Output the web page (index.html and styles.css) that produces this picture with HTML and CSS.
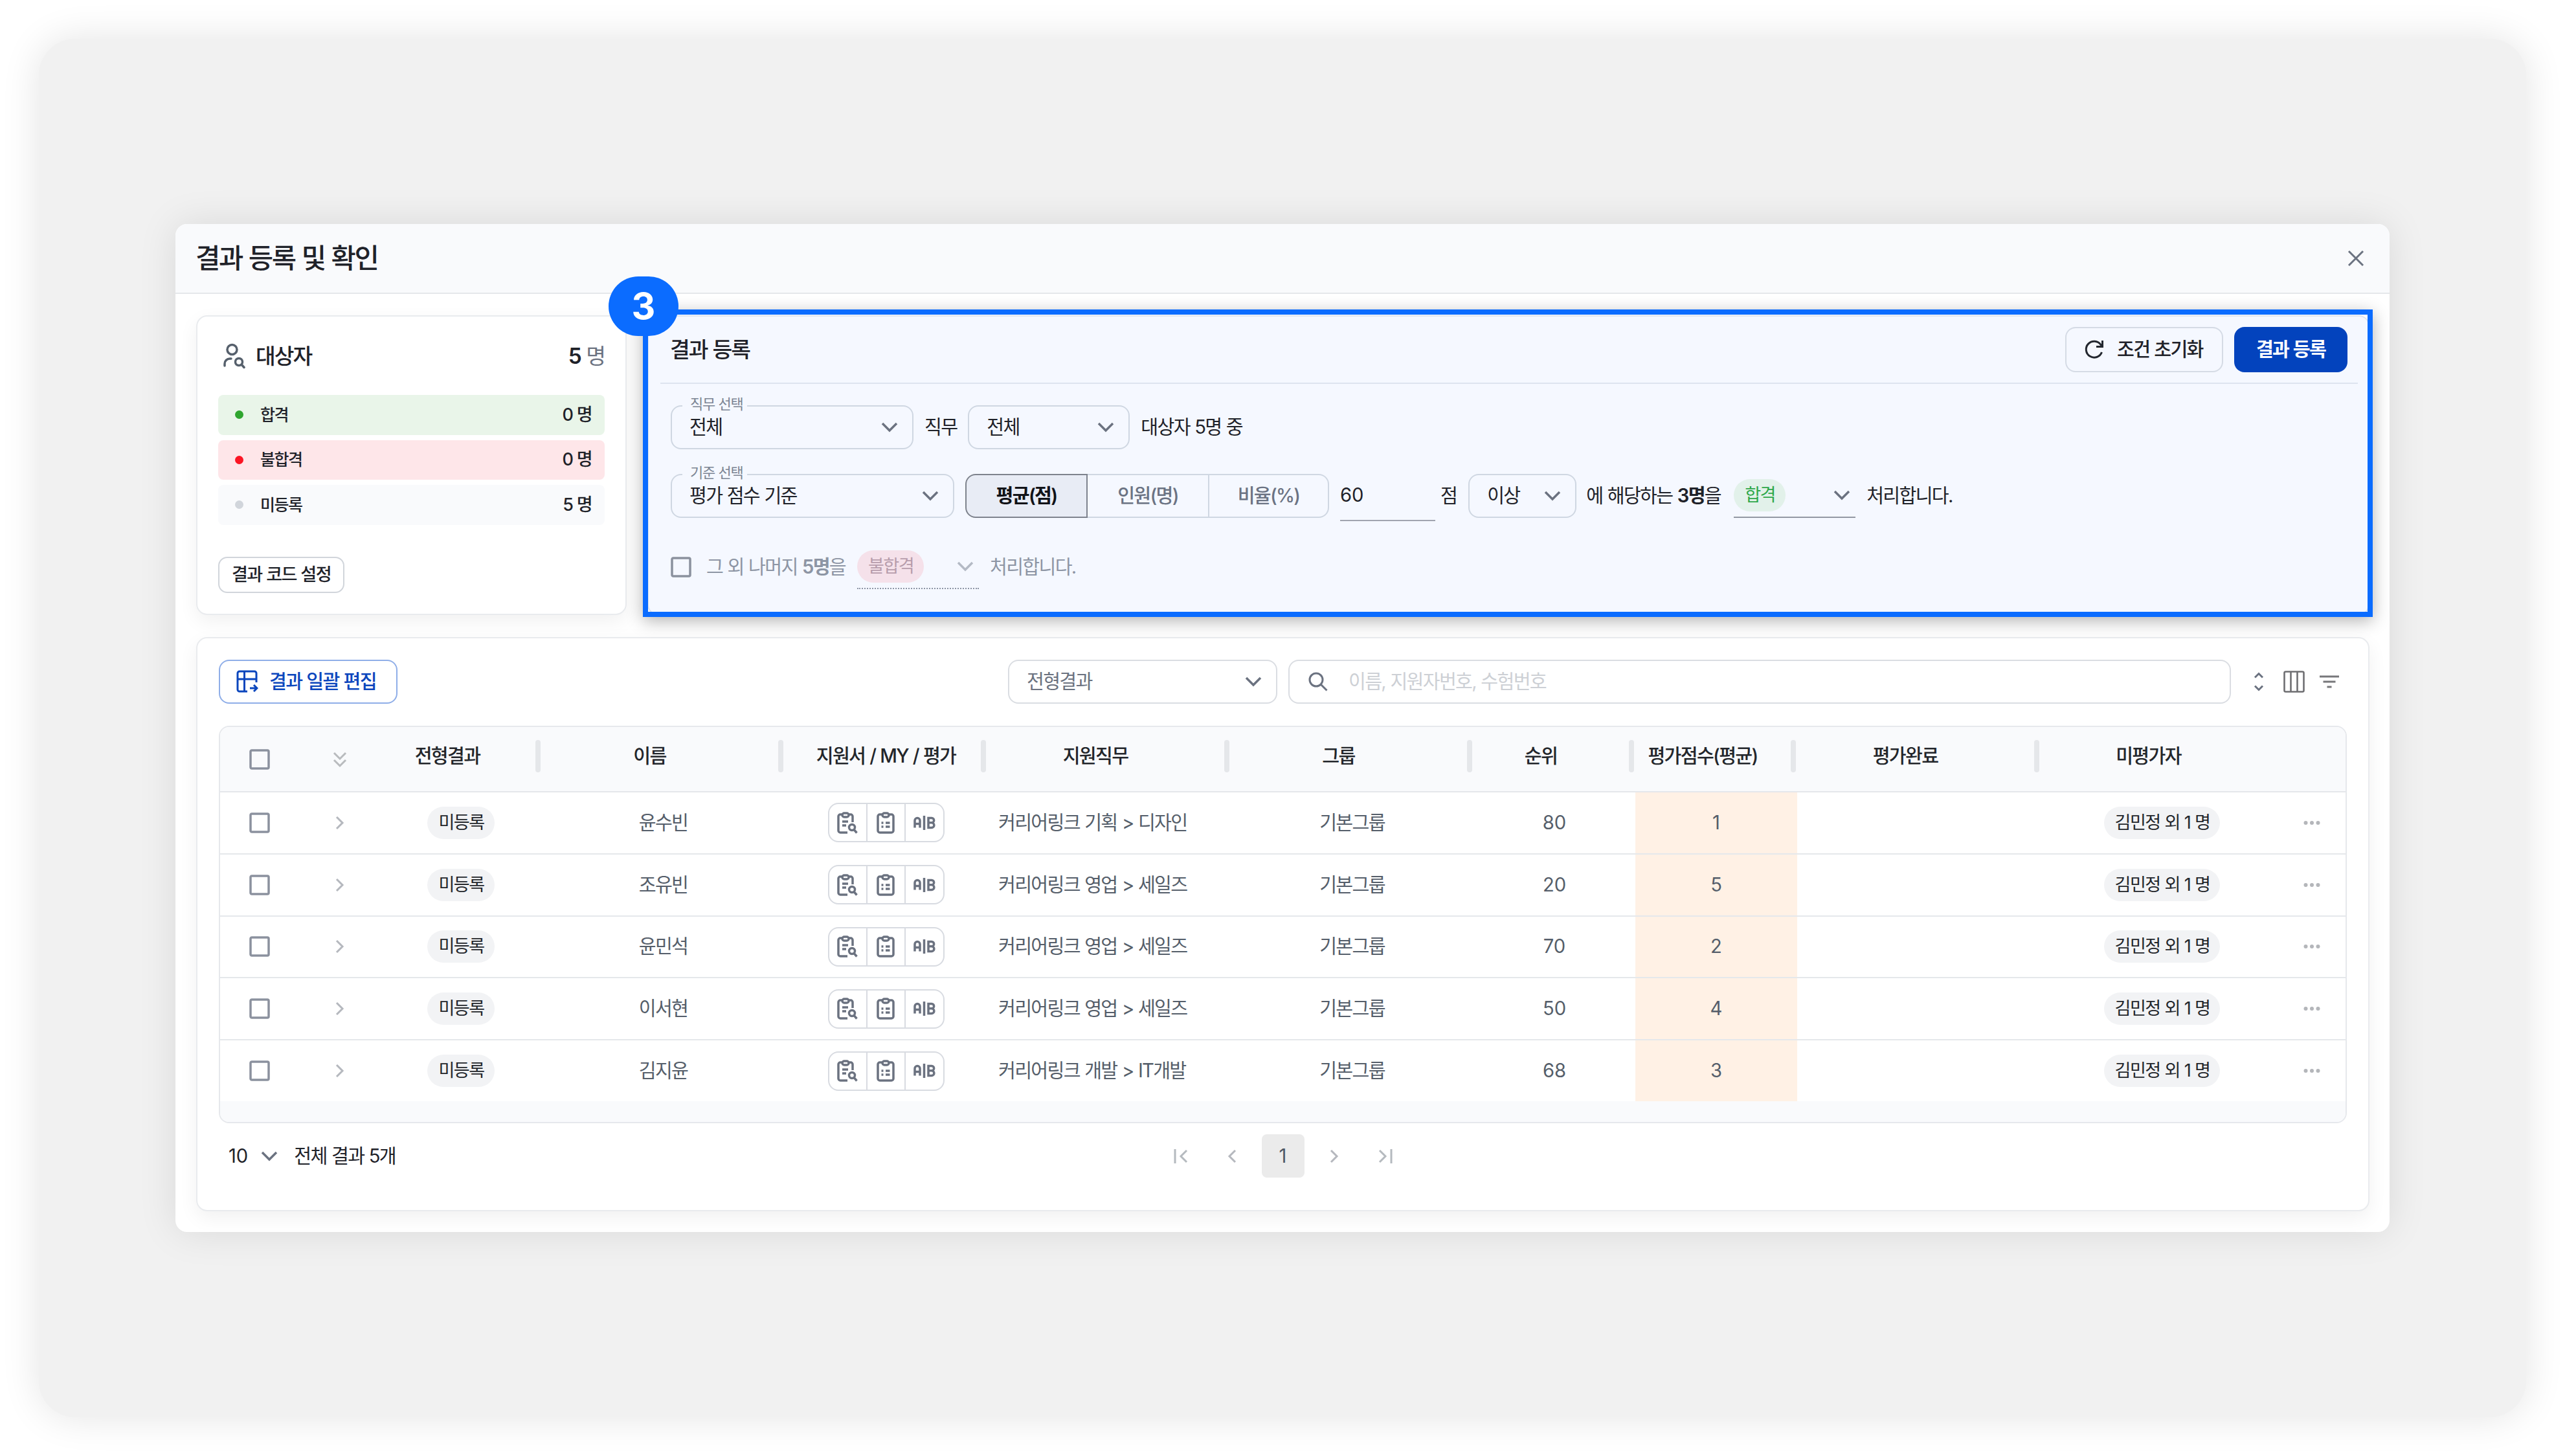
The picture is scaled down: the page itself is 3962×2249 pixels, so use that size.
FILE: index.html
```html
<!DOCTYPE html>
<html lang="ko">
<head>
  <meta charset="UTF-8" />
  <meta name="viewport" content="width=device-width, initial-scale=1.0"/>
  <title>결과 등록 및 확인</title>
  <link rel="stylesheet" href="styles.css">
</head>
<body>

  <!-- icons -->
  <svg class="sprite" aria-hidden="true">
    <symbol id="i-down" viewBox="0 0 26 16"><path d="M2 2l11 11L24 2"/></symbol>
    <symbol id="i-right" viewBox="0 0 14 22"><path d="M2 2l9 9-9 9"/></symbol>
    <symbol id="i-left" viewBox="0 0 14 22"><path d="M12 2l-9 9 9 9"/></symbol>
    <symbol id="i-first" viewBox="0 0 24 24"><path d="M3 1v22M21 3l-9 9 9 9"/></symbol>
    <symbol id="i-last" viewBox="0 0 24 24"><path d="M21 1v22M3 3l9 9-9 9"/></symbol>
    <symbol id="i-double" viewBox="0 0 22 26"><path d="M2 3l9 9 9-9M2 14l9 9 9-9"/></symbol>
    <symbol id="i-check" viewBox="0 0 32 32"><rect x="2" y="2" width="28" height="28" rx="2"/></symbol>
    <symbol id="i-close" viewBox="0 0 26 26"><path d="M2 2l22 22M24 2L2 24"/></symbol>
    <symbol id="i-person" viewBox="0 0 34 40">
      <circle cx="13.5" cy="10" r="7.5"/>
      <path d="M2 35v-3a8 8 0 0 1 8-8h2"/>
      <circle cx="24" cy="29" r="5.5"/><path d="M28 33l4 4.500"/>
    </symbol>
    <symbol id="i-refresh" viewBox="0 0 32 32">
      <path d="M27.500 20A12.500 12.500 0 1 1 26 8.500L28.500 11"/><path d="M28.500 2v9.500H19"/>
    </symbol>
    <symbol id="i-table" viewBox="0 0 34 36">
      <path d="M31 19V5a3 3 0 0 0-3-3H5a3 3 0 0 0-3 3v25a3 3 0 0 0 3 3h12M2 14h29M12.500 2v31"/>
      <path d="M21 28h10M27 23l5 5-5 5"/>
    </symbol>
    <symbol id="i-search" viewBox="0 0 30 30"><circle cx="12" cy="12" r="10"/><path d="M19.500 19.500l9 9"/></symbol>
    <symbol id="i-sort" viewBox="0 0 16 30"><path d="M2 8.500l6-6 6 6M2 21.500l6 6 6-6"/></symbol>
    <symbol id="i-columns" viewBox="0 0 33 34"><rect x="1.500" y="1.500" width="30" height="31" rx="2"/><path d="M11.500 2v30M21.500 2v30"/></symbol>
    <symbol id="i-filter" viewBox="0 0 30 20"><path d="M0 2h30M5.500 10h19M11.500 18h7"/></symbol>
    <symbol id="i-cliplook" viewBox="0 0 32 34">
      <path d="M8 4H5a3 3 0 0 0-3 3v22a3 3 0 0 0 3 3h11M18 4h3a3 3 0 0 1 3 3v9"/>
      <rect x="8" y="2" width="10" height="6" rx="3"/>
      <path d="M8 15h9M8 21h6"/><circle cx="23" cy="24" r="4.500"/><path d="M26.500 28l4 4.500"/>
    </symbol>
    <symbol id="i-cliplist" viewBox="0 0 28 34">
      <path d="M9 4H5a3 3 0 0 0-3 3v22a3 3 0 0 0 3 3h18a3 3 0 0 0 3-3V7a3 3 0 0 0-3-3h-4"/>
      <rect x="9" y="2" width="10" height="6" rx="3"/>
      <path d="M7.500 17h3M14 17h6.500M7.500 23h3M14 23h6.500"/>
    </symbol>
    <symbol id="i-ab" viewBox="0 0 34 24">
      <path d="M2 19.500V8.500a4 4 0 0 1 8 0v11M2 13.500h8M16.500 1v22M23 4.500h5a3.500 3.500 0 0 1 0 7.300a3.800 3.800 0 0 1 0 7.700h-5zM23 11.800h5"/>
    </symbol>
    <symbol id="i-more" viewBox="0 0 26 8"><circle cx="3.500" cy="4" r="3"/><circle cx="13" cy="4" r="3"/><circle cx="22.500" cy="4" r="3"/></symbol>
  </svg>

  <div class="stage">
    <div class="modal">
      <header class="modal-header">
        <h1>결과 등록 및 확인</h1>
        <svg class="icon close"><use href="#i-close"/></svg>
      </header>

      <div class="modal-body">
        <div class="top">
          <section class="card summary">
            <div class="summary-title">
              <svg class="icon person"><use href="#i-person"/></svg>
              <h2>대상자</h2>
              <p><b>5</b> 명</p>
            </div>
            <ul class="status-list">
              <li class="pass"><i></i><span>합격</span><em>0 명</em></li>
              <li class="fail"><i></i><span>불합격</span><em>0 명</em></li>
              <li class="none"><i></i><span>미등록</span><em>5 명</em></li>
            </ul>
            <button class="code-btn">결과 코드 설정</button>
          </section>

          <section class="panel">
            <div class="panel-header">
              <h2>결과 등록</h2>
              <button class="reset-btn"><svg class="icon refresh"><use href="#i-refresh"/></svg>조건 초기화</button>
              <button class="submit-btn">결과 등록</button>
            </div>

            <div class="line line-job">
              <div class="select w-job"><span class="legend">직무 선택</span>전체<svg class="icon down"><use href="#i-down"/></svg></div>
              <span>직무</span>
              <div class="select w-all">전체<svg class="icon down"><use href="#i-down"/></svg></div>
              <span>대상자 5명 중</span>
            </div>

            <div class="line line-rule">
              <div class="select w-rule"><span class="legend">기준 선택</span>평가 점수 기준<svg class="icon down"><use href="#i-down"/></svg></div>
              <div class="toggle">
                <button class="on">평균(점)</button>
                <button>인원(명)</button>
                <button>비율(%)</button>
              </div>
              <div class="score">60</div>
              <span class="unit">점</span>
              <div class="select w-cmp">이상<svg class="icon down"><use href="#i-down"/></svg></div>
              <span class="target">에 해당하는 <b>3명</b>을</span>
              <div class="result"><span class="pill pill-pass">합격</span><svg class="icon down"><use href="#i-down"/></svg></div>
              <span>처리합니다.</span>
            </div>

            <div class="line line-rest">
              <svg class="icon check"><use href="#i-check"/></svg>
              <span class="rest">그 외 나머지 <b>5명</b>을</span>
              <div class="result"><span class="pill pill-fail">불합격</span><svg class="icon down"><use href="#i-down"/></svg></div>
              <span>처리합니다.</span>
            </div>

            <div class="highlight"></div>
            <div class="step">3</div>
          </section>
        </div>

        <section class="card list">
          <div class="toolbar">
            <button class="edit-btn"><svg class="icon table-icon"><use href="#i-table"/></svg>결과 일괄 편집</button>
            <div class="select filter">전형결과<svg class="icon down"><use href="#i-down"/></svg></div>
            <div class="search"><svg class="icon lens"><use href="#i-search"/></svg>이름, 지원자번호, 수험번호</div>
            <div class="tools">
              <svg class="icon sort"><use href="#i-sort"/></svg>
              <svg class="icon columns"><use href="#i-columns"/></svg>
              <svg class="icon filter-icon"><use href="#i-filter"/></svg>
            </div>
          </div>

          <div class="table">
            <div class="tr th">
              <div><svg class="icon check"><use href="#i-check"/></svg></div>
              <div><svg class="icon double"><use href="#i-double"/></svg></div>
              <div class="col">전형결과</div>
              <div class="col">이름</div>
              <div class="col wide">지원서 / MY / 평가</div>
              <div class="col">지원직무</div>
              <div class="col">그룹</div>
              <div class="col">순위</div>
              <div class="col">평가점수(평균)</div>
              <div class="col">평가완료</div>
              <div class="col last">미평가자</div>
              <div></div>
            </div>
            <div id="rows"></div>
            <div class="table-foot"></div>
          </div>

          <div class="pager">
            <div class="page-size"><span class="size">10</span><svg class="icon down"><use href="#i-down"/></svg><span>전체 결과 5개</span></div>
            <div class="pages">
              <span><svg class="icon end"><use href="#i-first"/></svg></span>
              <span><svg class="icon arrow"><use href="#i-left"/></svg></span>
              <span class="current">1</span>
              <span><svg class="icon arrow"><use href="#i-right"/></svg></span>
              <span><svg class="icon end"><use href="#i-last"/></svg></span>
            </div>
          </div>
        </section>
      </div>
    </div>
  </div>

  <script>
    const applicants = [
      { name: "윤수빈", job: "커리어링크 기획 > 디자인", rank: 80, score: 1 },
      { name: "조유빈", job: "커리어링크 영업 > 세일즈", rank: 20, score: 5 },
      { name: "윤민석", job: "커리어링크 영업 > 세일즈", rank: 70, score: 2 },
      { name: "이서현", job: "커리어링크 영업 > 세일즈", rank: 50, score: 4 },
      { name: "김지윤", job: "커리어링크 개발 > IT개발", rank: 68, score: 3 }
    ];

    const icon = (id, cls) => `<svg class="icon ${cls}"><use href="#${id}"/></svg>`;

    document.getElementById("rows").innerHTML = applicants.map(a => `
      <div class="tr">
        <div>${icon("i-check", "check")}</div>
        <div>${icon("i-right", "arrow")}</div>
        <div><span class="pill">미등록</span></div>
        <div>${a.name}</div>
        <div>
          <div class="docs">
            <span>${icon("i-cliplook", "cliplook")}</span>
            <span>${icon("i-cliplist", "cliplist")}</span>
            <span>${icon("i-ab", "ab")}</span>
          </div>
        </div>
        <div class="job">${a.job.replace(">", "&gt;")}</div>
        <div>기본그룹</div>
        <div class="num">${a.rank}</div>
        <div class="num point">${a.score}</div>
        <div></div>
        <div><span class="pill">김민정 외 1 명</span></div>
        <div class="more-cell">${icon("i-more", "more")}</div>
      </div>
    `).join("");
  </script>

</body>
</html>
```

FILE: styles.css
```css
* {
  box-sizing: border-box;
  letter-spacing: -0.058em;
  word-spacing: 0.03em;
}

body {
  margin: 0;
  padding: 60px;
  background: #fff;
  font-family: Inter, "Noto Sans CJK KR", sans-serif;
  font-size: 29.2px;
  line-height: 40px;
  color: #1f2229;
}

h1, h2, p, ul {
  margin: 0;
  padding: 0;
  font-weight: 500;
}

b {
  font-weight: 600;
}

button {
  font: inherit;
  color: inherit;
  background: none;
  padding: 0;
  border: 2px solid #d1d5db;
  border-radius: 16px;
  white-space: nowrap;
}

.sprite {
  position: absolute;
  width: 0;
  height: 0;
}

/* icons */
.icon {
  display: block;
  flex: none;
  fill: none;
  stroke: #6b7280;
  stroke-width: 3.5;
}
.down { width: 26px; height: 16px; }
.arrow { width: 14px; height: 22px; stroke: #b5b8be; stroke-width: 3; }
.end { width: 24px; height: 24px; stroke: #b5babf; stroke-width: 3; }
.double { width: 22px; height: 26px; stroke: #b9bbbe; stroke-width: 3; }
.check { width: 32px; height: 32px; stroke: #8b919e; stroke-width: 3.5; }
.close { width: 26px; height: 26px; stroke-width: 3; }
.person { width: 34px; height: 40px; stroke: #56606c; stroke-linecap: round; }
.refresh { width: 32px; height: 32px; stroke: #23272f; stroke-width: 3; }
.table-icon { width: 34px; height: 36px; stroke: #0b46bd; stroke-width: 3; }
.lens { width: 30px; height: 30px; stroke-width: 3; }
.sort { width: 16px; height: 30px; stroke-width: 3; }
.columns { width: 33px; height: 34px; stroke: #6f6f72; stroke-width: 2.6; }
.filter-icon { width: 30px; height: 20px; stroke: #77777a; stroke-width: 3.2; }
.cliplook { width: 32px; height: 34px; }
.cliplist { width: 28px; height: 34px; }
.ab { width: 34px; height: 24px; }
.more { width: 26px; height: 8px; fill: #b4b6ba; stroke: none; }

/* frame */
.stage {
  height: 2129px;
  padding: 286px 211px;
  background: #f1f1f1;
  border-radius: 56px;
  box-shadow: 0 0 60px rgba(0, 0, 0, 0.11);
}
.modal {
  height: 1557px;
  background: #fff;
  border-radius: 18px;
  box-shadow: 0 0 60px rgba(0, 0, 0, 0.1);
}
.modal-header {
  display: flex;
  align-items: center;
  justify-content: space-between;
  height: 108px;
  padding: 0 39px 0 31px;
  background: #f9fafc;
  border-bottom: 2px solid #e5e7eb;
  border-radius: 18px 18px 0 0;
}
.modal-header h1 {
  font-size: 41.7px;
}
.modal-body {
  padding: 33px 31px 0 32px;
}
.top {
  display: flex;
  gap: 32px;
}
.card {
  background: #fff;
  border: 2px solid #e9ebee;
  border-radius: 17px;
  box-shadow: 0 10px 30px rgba(0, 0, 0, 0.06);
}

/* summary */
.summary {
  width: 665px;
  height: 463px;
  padding: 37px 32px 0;
}
.summary-title {
  display: flex;
  align-items: center;
  height: 48px;
  padding-left: 8px;
  font-size: 33.4px;
}
.summary-title h2 {
  flex: 1;
  margin-left: 16px;
  font-size: 33.4px;
}
.summary-title p {
  color: #6b7280;
  font-weight: 400;
}
.summary-title b {
  color: #1f2229;
}
.status-list {
  display: grid;
  gap: 8px;
  margin-top: 36px;
  list-style: none;
}
.status-list li {
  display: flex;
  align-items: center;
  height: 61.500px;
  padding: 0 20px 0 26px;
  border-radius: 8px;
  font-size: 25px;
}
.status-list i {
  width: 13px;
  height: 13px;
  border-radius: 50%;
}
.status-list span {
  flex: 1;
  margin-left: 26px;
  font-weight: 500;
}
.status-list em {
  font-style: normal;
  font-size: 27px;
}
.pass { background: #e9f5e9; }
.pass i { background: #2fa52f; }
.fail { background: #fee6e9; }
.fail i { background: #fb1524; }
.none { background: #f9fafc; }
.none i { background: #d1d5db; }
.code-btn {
  display: block;
  width: 195px;
  height: 56px;
  margin-top: 49px;
  border-radius: 14px;
  font-size: 27.1px;
  font-weight: 500;
}

/* result panel */
.panel {
  position: relative;
  flex: 1;
  height: 463px;
  padding: 0 16px 0 18px;
  background: #f5f8ff;
  border: 2px solid #dfe5ef;
  border-radius: 16px;
}
.panel-header {
  display: flex;
  align-items: center;
  gap: 17px;
  height: 104px;
  padding: 0 16px 0 15px;
  border-bottom: 2px solid #dde4ef;
}
.panel-header h2 {
  flex: 1;
  font-size: 33.4px;
}
.reset-btn {
  display: flex;
  align-items: center;
  gap: 19px;
  width: 244px;
  height: 70px;
  padding-left: 27px;
  border-color: #d5dbe5;
  font-weight: 500;
}
.submit-btn {
  width: 175px;
  height: 70px;
  border: 0;
  background: #0343bd;
  color: #fff;
  font-weight: 600;
}
.line {
  display: flex;
  align-items: center;
  gap: 17px;
  padding-left: 16px;
  white-space: nowrap;
}
.line-job { margin-top: 33px; }
.line-rule { margin-top: 38px; }
.line-rest {
  margin-top: 42px;
  height: 68px;
  color: #8d95a4;
}
.select {
  position: relative;
  display: flex;
  align-items: center;
  justify-content: space-between;
  height: 68px;
  padding: 0 22px 0 27px;
  border: 2px solid #cfd7e2;
  border-radius: 16px;
}
.legend {
  position: absolute;
  top: -17px;
  left: 16px;
  padding: 0 7px 0 12px;
  background: #f5f8ff;
  font-size: 22px;
  line-height: 26px;
  color: #7b8493;
}
.w-job { width: 375px; }
.w-all { width: 250px; }
.w-rule { width: 438px; }
.w-cmp { width: 167px; }
.toggle {
  display: flex;
}
.toggle button {
  width: 188px;
  height: 68px;
  border-color: #cfd7e2;
  border-left-width: 0;
  border-radius: 0;
  color: #6b7383;
  font-weight: 500;
}
.toggle .on {
  width: 189px;
  border: 2px solid #7e838d;
  border-radius: 16px 0 0 16px;
  background: #e8ecf5;
  color: #111318;
  font-weight: 600;
}
.toggle button:last-child {
  width: 185px;
  border-radius: 0 16px 16px 0;
}
.score {
  width: 147px;
  height: 73px;
  line-height: 66px;
  margin-bottom: -5px;
  border-bottom: 2px solid #a0a4af;
  letter-spacing: 0;
}
.unit { margin: 0 1px 0 -9px; }
.target {
  width: 211px;
  margin-left: -2px;
}
.result {
  display: flex;
  align-items: center;
  justify-content: space-between;
  width: 188px;
  height: 68px;
  padding: 0 8px 0 0;
  border-bottom: 2px solid #9298a3;
}
.pill {
  display: inline-flex;
  align-items: center;
  height: 50px;
  padding: 0 16px 0 17px;
  border-radius: 25px;
  background: #f2f3f5;
  color: #23262b;
  font-size: 27.1px;
}
.pill-pass {
  background: #e2f1ea;
  color: #2ea84a;
}
.pill-fail {
  background: #f5e1ea;
  color: #b79dac;
}
.rest {
  width: 216px;
  margin: 0 0 0 6px;
}
.line-rest .result {
  border-bottom: 2px dotted #8d95a4;
}
.line-rest .down {
  stroke: #b4bac5;
}
.highlight {
  position: absolute;
  inset: -11px -7px -5px -9px;
  border: 8px solid #0b6cff;
  box-shadow: 0 6px 24px rgba(0, 0, 0, 0.3);
}
.step {
  position: absolute;
  top: -62px;
  left: -62px;
  width: 108px;
  height: 92px;
  border-radius: 46px;
  background: #0b6cff;
  color: #fff;
  font-size: 57px;
  font-weight: 700;
  line-height: 92px;
  letter-spacing: 0;
  text-align: center;
}

/* list */
.list {
  height: 887px;
  margin-top: 34px;
  padding: 33px 33px 0;
}
.toolbar {
  display: flex;
  align-items: center;
  height: 68px;
}
.edit-btn {
  display: flex;
  align-items: center;
  gap: 17px;
  width: 276px;
  height: 68px;
  padding-left: 25px;
  border-color: #8faee8;
  color: #0b46bd;
  font-weight: 500;
}
.filter {
  width: 416px;
  margin-left: auto;
  border-color: #dadde2;
  color: #6b7280;
}
.search {
  display: flex;
  align-items: center;
  gap: 32px;
  width: 1456px;
  height: 68px;
  margin-left: 17px;
  padding-left: 29px;
  border: 2px solid #dadde2;
  border-radius: 16px;
  color: #cdd0d5;
}
.tools {
  display: flex;
  align-items: center;
  gap: 23px;
  padding: 0 12px 0 35px;
}
.tools .columns {
  margin: 0 0 0 7px;
}

/* table */
.table {
  height: 614px;
  margin-top: 34px;
  border: 2px solid #e6e8ec;
  border-radius: 16px;
  overflow: hidden;
}
.tr {
  display: grid;
  grid-template-columns: 122px 125px 250px 375px 313px 376px 375px 250px 250px 376px 375px 1fr;
  height: 95.750px;
  border-bottom: 2px solid #e5e8eb;
  color: #555e6a;
}
.tr:last-child {
  border-bottom: 0;
  height: 94px;
}
.tr > div {
  display: flex;
  align-items: center;
  justify-content: center;
  white-space: nowrap;
}
.tr.th {
  height: 101px;
  background: #f9fafc;
  border-color: #e5e7eb;
  color: #23262b;
  font-weight: 500;
}
.tr.th .col {
  position: relative;
  padding: 0 42px 10px 0;
}
.tr.th .wide {
  padding-right: 0;
}
.tr.th .col::after {
  content: "";
  position: absolute;
  right: 2px;
  top: 20px;
  width: 8px;
  height: 50px;
  border-radius: 4px;
  background: #e5e7ea;
}
.tr.th .last::after {
  display: none;
}
.tr > .job {
  justify-content: flex-start;
  padding-left: 17px;
}
.tr > .num {
  letter-spacing: 0;
}
.tr > .point {
  margin-bottom: -2px;
  padding-bottom: 2px;
  background: #fff1e5;
  box-shadow: inset 0 -2px #e5e8eb;
}
.tr:last-child > .point {
  margin-bottom: 0;
  padding-bottom: 0;
  box-shadow: none;
}
.tr > .more-cell {
  padding-right: 9px;
}
.docs {
  display: flex;
  width: 180px;
  height: 61px;
  border: 2px solid #d8dbe1;
  border-radius: 16px;
}
.docs span {
  display: flex;
  flex: 1;
  align-items: center;
  justify-content: center;
}
.docs span + span {
  border-left: 2px solid #d8dbe1;
}
.table-foot {
  height: 40px;
  background: #f9fafc;
}

/* pagination */
.pager {
  display: grid;
  grid-template-columns: 1fr auto 1fr;
  align-items: center;
  margin-top: 17px;
}
.page-size {
  display: flex;
  align-items: center;
  padding-left: 15px;
}
.page-size .size {
  letter-spacing: 0;
}
.page-size .down {
  margin: 0 25px 0 20px;
}
.pages {
  display: flex;
}
.pages span {
  display: flex;
  align-items: center;
  justify-content: center;
  width: 66px;
  height: 67px;
  margin: 0 6.500px;
  border-radius: 8px;
  letter-spacing: 0;
}
.pages .current {
  background: #ebebeb;
  color: #4f5864;
}
```
